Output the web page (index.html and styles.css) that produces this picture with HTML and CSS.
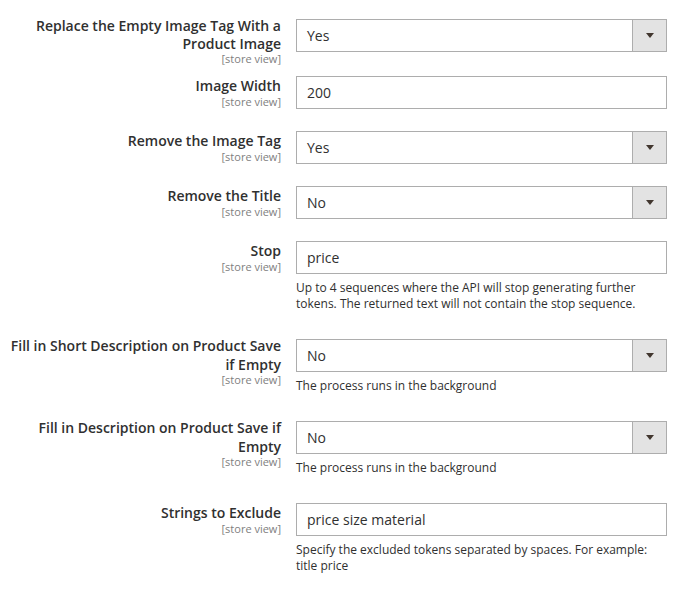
FILE: index.html
```html
<!DOCTYPE html>
<html lang="en">
<head>
<meta charset="utf-8">
<title>Config</title>
<link rel="stylesheet" href="styles.css">
</head>
<body>
<div class="form">

  <div class="row">
    <div class="field-label multi">Replace the Empty Image Tag With a Product Image<span class="scope">[store view]</span></div>
    <div class="control">
      <div class="select"><span class="value">Yes</span><span class="arrow"><svg width="8" height="5" viewBox="0 0 8 5"><polygon points="0,0 8,0 4,5" fill="#41362f"/></svg></span></div>
    </div>
  </div>

  <div class="row">
    <div class="field-label">Image Width<span class="scope">[store view]</span></div>
    <div class="control">
      <div class="input">200</div>
    </div>
  </div>

  <div class="row">
    <div class="field-label">Remove the Image Tag<span class="scope">[store view]</span></div>
    <div class="control">
      <div class="select"><span class="value">Yes</span><span class="arrow"><svg width="8" height="5" viewBox="0 0 8 5"><polygon points="0,0 8,0 4,5" fill="#41362f"/></svg></span></div>
    </div>
  </div>

  <div class="row">
    <div class="field-label">Remove the Title<span class="scope">[store view]</span></div>
    <div class="control">
      <div class="select"><span class="value">No</span><span class="arrow"><svg width="8" height="5" viewBox="0 0 8 5"><polygon points="0,0 8,0 4,5" fill="#41362f"/></svg></span></div>
    </div>
  </div>

  <div class="row">
    <div class="field-label">Stop<span class="scope">[store view]</span></div>
    <div class="control">
      <div class="input">price</div>
      <p class="note">Up to 4 sequences where the API will stop generating further tokens. The returned text will not contain the stop sequence.</p>
    </div>
  </div>

  <div class="row">
    <div class="field-label multi">Fill in Short Description on Product Save if Empty<span class="scope">[store view]</span></div>
    <div class="control">
      <div class="select"><span class="value">No</span><span class="arrow"><svg width="8" height="5" viewBox="0 0 8 5"><polygon points="0,0 8,0 4,5" fill="#41362f"/></svg></span></div>
      <p class="note">The process runs in the background</p>
    </div>
  </div>

  <div class="row">
    <div class="field-label multi">Fill in Description on Product Save if Empty<span class="scope">[store view]</span></div>
    <div class="control">
      <div class="select"><span class="value">No</span><span class="arrow"><svg width="8" height="5" viewBox="0 0 8 5"><polygon points="0,0 8,0 4,5" fill="#41362f"/></svg></span></div>
      <p class="note">The process runs in the background</p>
    </div>
  </div>

  <div class="row">
    <div class="field-label">Strings to Exclude<span class="scope">[store view]</span></div>
    <div class="control">
      <div class="input">price size material</div>
      <p class="note">Specify the excluded tokens separated by spaces. For example: title price</p>
    </div>
  </div>

</div>
</body>
</html>
```

FILE: styles.css
```css
html, body {
  margin: 0;
  padding: 0;
  background: #ffffff;
}

body {
  font-family: "Open Sans", "Liberation Sans", sans-serif;
  color: #303030;
}

.form {
  padding: 19px 18px 0 7px;
}

.row {
  display: grid;
  grid-template-columns: 274px 371px;
  column-gap: 15px;
  align-items: start;
  margin-bottom: 22px;
}

.field-label {
  text-align: right;
  font-size: 14px;
  font-weight: 600;
  line-height: 18.2px;
  padding-top: 1px;
  color: #303030;
}

.field-label.multi {
  margin-top: -3px;
  padding-bottom: 1px;
}

.scope {
  display: block;
  font-size: 11px;
  font-weight: 400;
  line-height: 11px;
  margin-bottom: -11px;
  color: #808080;
}

.control {
  display: flex;
  flex-direction: column;
}

.input,
.select {
  box-sizing: border-box;
  height: 33px;
  border: 1px solid #adadad;
  background: #ffffff;
  font-size: 14px;
  line-height: 31px;
  color: #303030;
}

.input {
  padding: 0 10px;
}

.select {
  display: flex;
}

.select .value {
  flex: 1;
  padding: 0 10px;
}

.select .arrow {
  width: 33px;
  border-left: 1px solid #adadad;
  background: #e3e3e3;
  display: flex;
  align-items: center;
  justify-content: center;
}

.select .arrow svg {
  display: block;
  margin-left: 1px;
}

.note {
  margin: 6px 0 5px;
  font-size: 12px;
  line-height: 16px;
  color: #303030;
}
```
